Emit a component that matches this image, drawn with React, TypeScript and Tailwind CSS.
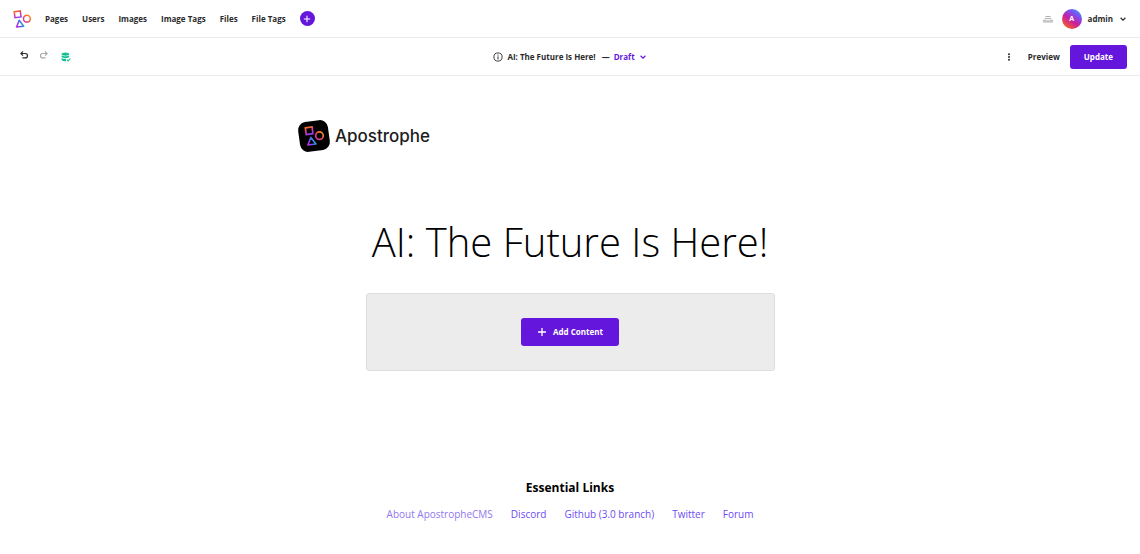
import type { ReactNode } from "react";

const navItems = ["Pages", "Users", "Images", "Image Tags", "Files", "File Tags"];

const footerLinks = [
  { label: "About ApostropheCMS", tone: "text-[#9277ee]" },
  { label: "Discord", tone: "text-[#6c4cf5]" },
  { label: "Github (3.0 branch)", tone: "text-[#6c4cf5]" },
  { label: "Twitter", tone: "text-[#6c4cf5]" },
  { label: "Forum", tone: "text-[#6c4cf5]" },
];

function Shapes({ id, className }: { id: string; className: string }) {
  return (
    <svg viewBox="0 0 18 18" className={className} fill="none" strokeWidth="1.5" aria-hidden="true">
      <defs>
        <linearGradient id={id + "-square"} x1="0.3" y1="0" x2="0.7" y2="1">
          <stop offset="0" stopColor="#f9701f" />
          <stop offset="0.5" stopColor="#d938a8" />
          <stop offset="1" stopColor="#8a3cf5" />
        </linearGradient>
        <linearGradient id={id + "-circle"} x1="0" y1="1" x2="1" y2="0">
          <stop offset="0" stopColor="#c62fc0" />
          <stop offset="0.5" stopColor="#f0504a" />
          <stop offset="1" stopColor="#f8a01c" />
        </linearGradient>
        <linearGradient id={id + "-triangle"} x1="0" y1="0.8" x2="1" y2="0.4">
          <stop offset="0" stopColor="#c22be0" />
          <stop offset="0.5" stopColor="#5b5cf5" />
          <stop offset="1" stopColor="#14b8c4" />
        </linearGradient>
      </defs>
      <path d="M1.200 1.700 7.300.9l.7 6-6 .8z" stroke={`url(#${id}-square)`} />
      <circle cx="13.900" cy="8.700" r="3.400" stroke={`url(#${id}-circle)`} />
      <path d="M6.200 10.300 10.700 16.200l-7.200.9z" stroke={`url(#${id}-triangle)`} strokeLinejoin="round" />
    </svg>
  );
}

function IconButton({ label, className = "", children }: { label: string; className?: string; children: ReactNode }) {
  return (
    <button type="button" aria-label={label} className={"flex items-center justify-center " + className}>
      {children}
    </button>
  );
}

function ChevronDown() {
  return (
    <svg viewBox="0 0 8 8" className="size-2" fill="none" stroke="currentColor" strokeWidth="1.2" aria-hidden="true">
      <path d="m1.6 2.8 2.4 2.3 2.4-2.3" />
    </svg>
  );
}

function UndoIcon({ className = "" }: { className?: string }) {
  return (
    <svg viewBox="0 0 10 10" className={"size-2.5 " + className} fill="none" stroke="currentColor" strokeWidth="1.2" aria-hidden="true">
      <path d="M2 3.500h4.300a2.200 2.200 0 0 1 0 4.400H3.400" />
      <path d="M4 1.400 1.900 3.500 4 5.600" />
    </svg>
  );
}

function DatabaseCheckIcon() {
  return (
    <svg viewBox="0 0 10 10" className="size-2.5" aria-hidden="true">
      <ellipse cx="4.4" cy="2.1" rx="3.8" ry="1.6" fill="currentColor" />
      <path d="M.6 3.200c1 1.300 6.600 1.300 7.600 0v1.900c-1 1.300-6.600 1.300-7.600 0z" fill="currentColor" />
      <path d="M.6 5.900c1 .9 3.200 1 4.400.9v2.500c-2 .1-3.800-.3-4.400-1.200z" fill="currentColor" />
      <path d="m5.900 7.700 1.200 1.200 2.200-2.400" fill="none" stroke="currentColor" strokeWidth="1.1" />
    </svg>
  );
}

function TrayIcon() {
  return (
    <svg viewBox="0 0 10 8" className="h-2 w-2.5" fill="none" stroke="currentColor" strokeWidth="1" aria-hidden="true">
      <path d="M2.300 1.500h5.400M1.800 3.500h6.400" />
      <path d="M.6 5.200v1.800h8.800V5.200H7.200c-.3 1-4.100 1-4.400 0z" fill="currentColor" fillOpacity="0.35" />
    </svg>
  );
}

function PlusIcon({ className }: { className: string }) {
  return (
    <svg viewBox="0 0 10 10" className={className} fill="none" stroke="currentColor" strokeWidth="1.3" aria-hidden="true">
      <path d="M5 1v8M1 5h8" />
    </svg>
  );
}

export default function App() {
  return (
    <div className="bg-white font-['Open_Sans','Noto_Sans',sans-serif] text-[#1c1c1c]">
      <header className="text-[8px] leading-4 font-bold text-[#2b2b2b]">
        <div className="flex h-[38px] items-center justify-between border-b border-[#ebebeb] px-[13px]">
          <div className="flex items-center gap-3.5">
            <a href="#home" aria-label="Home">
              <Shapes id="nav" className="size-[18px]" />
            </a>
            <nav className="flex items-center gap-3.5">
              {navItems.map((item) => (
                <a key={item} href={"#" + item.toLowerCase().replace(" ", "-")}>
                  {item}
                </a>
              ))}
            </nav>
            <IconButton label="Create new" className="size-[15px] rounded-full bg-[#6516dd] text-white">
              <PlusIcon className="size-2" />
            </IconButton>
          </div>
          <div className="flex items-center">
            <IconButton label="Submitted drafts" className="mr-[9px] text-[#b4b4b4]">
              <TrayIcon />
            </IconButton>
            <button type="button" className="flex items-center gap-1.5">
              <span className="flex size-5 items-center justify-center rounded-full bg-[linear-gradient(35deg,#f9641c_10%,#c81fa0_45%,#7c50f0_70%,#3b9cf5_95%)] text-[7px] font-bold text-white">
                A
              </span>
              <span>admin</span>
              <ChevronDown />
            </button>
          </div>
        </div>

        <div className="grid h-[38px] grid-cols-[1fr_auto_1fr] items-center border-b border-[#ebebeb] px-[13px]">
          <div className="flex items-center gap-2.5 pl-1.5">
            <IconButton label="Undo" className="pb-1">
              <UndoIcon />
            </IconButton>
            <IconButton label="Redo" className="pb-1 text-[#a9a9a9]">
              <UndoIcon className="-scale-x-100" />
            </IconButton>
            <IconButton label="Saved" className="ml-0.5 text-[#14bf96]">
              <DatabaseCheckIcon />
            </IconButton>
          </div>
          <div className="flex items-center gap-1">
            <svg viewBox="0 0 10 10" className="size-2.5" fill="none" stroke="currentColor" aria-hidden="true">
              <circle cx="5" cy="5" r="4.100" strokeWidth="0.9" />
              <path d="M5 4.400v3M5 2.500v1.100" strokeWidth="1" />
            </svg>
            <span className="mr-0.5">AI: The Future Is Here!</span>
            <span>—</span>
            <button type="button" className="flex items-center gap-1 text-[#6516dd]">
              Draft
              <ChevronDown />
            </button>
          </div>
          <div className="flex items-center justify-end">
            <IconButton label="More actions" className="mr-3.5">
              <svg viewBox="0 0 10 10" className="size-2.5" fill="currentColor" aria-hidden="true">
                <circle cx="5" cy="2.200" r="1" />
                <circle cx="5" cy="5" r="1" />
                <circle cx="5" cy="7.800" r="1" />
              </svg>
            </IconButton>
            <button type="button" className="mr-2.5">Preview</button>
            <button type="button" className="rounded-[3px] bg-[#6516dd] px-3.5 py-1 font-bold text-white">Update</button>
          </div>
        </div>
      </header>

      <main className="mx-auto flex max-w-[544px] flex-col pt-11">
        <a href="#site" className="flex items-center gap-1.5 self-start pl-px font-['Inter',sans-serif] text-[17px] leading-8 font-medium">
          <span className="flex size-[30px] -rotate-8 items-center justify-center rounded-[8px] bg-black">
            <Shapes id="site" className="size-5 rotate-8" />
          </span>
          Apostrophe
        </a>
        <h1 className="mt-[60px] text-center text-[40px] leading-[60px] font-light text-black">AI: The Future Is Here!</h1>
        <section className="mx-auto mt-[21px] flex w-full max-w-[409px] justify-center rounded-[3px] border border-[#dedede] bg-[#ececec] py-6">
          <button type="button" className="flex items-center gap-1.5 rounded-[3px] bg-[#6516dd] px-4 py-1.5 text-[8px] leading-4 font-bold text-white">
            <PlusIcon className="size-2.5" />
            Add Content
          </button>
        </section>
      </main>

      <footer className="mt-[107px] pb-8 text-center">
        <h2 className="text-[12px] leading-5 font-bold text-black">Essential Links</h2>
        <ul className="mt-1.5 flex justify-center gap-[18px] text-[10px] leading-5">
          {footerLinks.map((link) => (
            <li key={link.label}>
              <a href="#links" className={link.tone}>
                {link.label}
              </a>
            </li>
          ))}
        </ul>
      </footer>
    </div>
  );
}
